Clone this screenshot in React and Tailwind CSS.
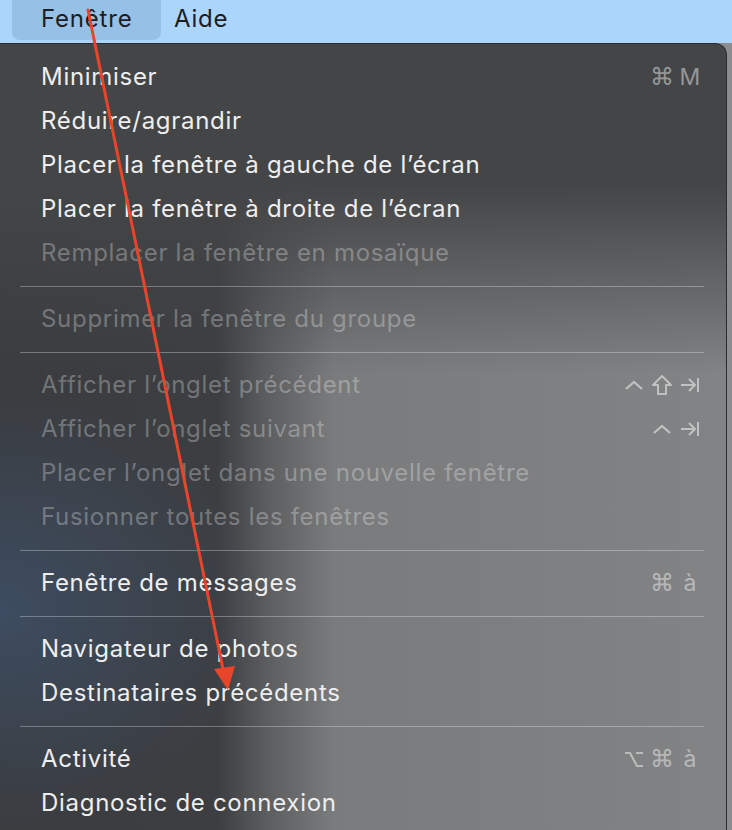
import React from 'react';

const font = { fontFamily: 'Inter, "Noto Sans", sans-serif' };

const Ctrl = () => (
  <svg width="20" height="12" viewBox="0 0 20 12" fill="none" stroke="currentColor" strokeWidth="2.2">
    <path d="M2 10 L10 3 L18 10" />
  </svg>
);
const Shift = () => (
  <svg width="22" height="22" viewBox="0 0 22 22" fill="none" stroke="currentColor" strokeWidth="2" strokeLinejoin="round">
    <path d="M11 2 L20 11 L15 11 L15 20 L7 20 L7 11 L2 11 Z" />
  </svg>
);
const Tab = () => (
  <svg width="20" height="18" viewBox="0 0 20 18" fill="none" stroke="currentColor" strokeWidth="2">
    <path d="M1 9 H15 M9 3 L15 9 L9 15 M18 2 V16" />
  </svg>
);
const Opt = () => (
  <svg width="20" height="18" viewBox="0 0 20 18" fill="none" stroke="currentColor" strokeWidth="2.2">
    <path d="M1 3 H6 L13 16 H19 M12 3 H19" />
  </svg>
);

const glyphs = { ctrl: <Ctrl />, shift: <Shift />, tab: <Tab />, opt: <Opt /> };

// null marks a separator
const items = [
  { label: 'Minimiser', keys: ['⌘', 'M'] },
  { label: 'Réduire/agrandir' },
  { label: 'Placer la fenêtre à gauche de l’écran' },
  { label: 'Placer la fenêtre à droite de l’écran' },
  { label: 'Remplacer la fenêtre en mosaïque', disabled: true },
  null,
  { label: 'Supprimer la fenêtre du groupe', disabled: true },
  null,
  { label: 'Afficher l’onglet précédent', disabled: true, keys: ['ctrl', 'shift', 'tab'] },
  { label: 'Afficher l’onglet suivant', disabled: true, keys: ['ctrl', 'tab'] },
  { label: 'Placer l’onglet dans une nouvelle fenêtre', disabled: true },
  { label: 'Fusionner toutes les fenêtres', disabled: true },
  null,
  { label: 'Fenêtre de messages', keys: ['⌘', 'à'] },
  null,
  { label: 'Navigateur de photos' },
  { label: 'Destinataires précédents' },
  null,
  { label: 'Activité', keys: ['opt', '⌘', 'à'] },
  { label: 'Diagnostic de connexion' },
];

function Shortcut({ keys, dim }) {
  return (
    <div className={`flex items-center ${dim ? 'text-white/50' : 'text-white/45'}`}>
      {keys.map((k, i) => (
        <span
          key={i}
          className="flex h-[28px] w-[28px] items-center justify-center text-[23px] leading-none"
          style={k === '⌘' ? { fontFamily: '"DejaVu Sans", sans-serif', fontSize: '24px' } : undefined}
        >
          {glyphs[k] || k}
        </span>
      ))}
    </div>
  );
}

function MenuRow({ item }) {
  return (
    <div className="flex h-[44px] items-center justify-between pl-[41px] pr-[22px]">
      <span
        className={`text-[24px] tracking-[0.7px] ${
          item.disabled ? 'text-white/30' : 'text-[#eeeeee]'
        }`}
      >
        {item.label}
      </span>
      {item.keys ? <Shortcut keys={item.keys} dim={item.disabled} /> : null}
    </div>
  );
}

export default function App() {
  return (
    <div className="relative h-[830px] w-[732px] overflow-hidden bg-[#8c8d8e]" style={font}>
      {/* Menu bar */}
      <div className="flex h-[43px] items-start bg-[#acd5fb] text-[24px] tracking-[0.8px] text-[#1d1d1f]">
        <div className="ml-[12px] flex h-[40px] w-[149px] items-center rounded-b-lg bg-[#97c0e6] pl-[29px] pb-[2px]">
          Fenêtre
        </div>
        <div className="flex h-[40px] items-center pl-[13px] pb-[2px]">Aide</div>
      </div>

      {/* Dropdown */}
      <div className="h-[787px] w-[727px] rounded-tr-[12px] border-t border-r border-[#2b2b2c] bg-[#808182] bg-[radial-gradient(ellipse_260px_220px_at_0%_72%,rgba(62,82,108,0.75),transparent),linear-gradient(to_bottom,#444547_0%,#444547_18%,rgba(68,69,71,0)_42%),linear-gradient(to_right,#3a3c3f_0%,#3c3e41_30%,#5c5e60_37%,#7a7b7c_46%,#828384_100%)] pt-[11px]">
        {items.map((item, i) =>
          item ? (
            <MenuRow key={i} item={item} />
          ) : (
            <div key={i} className="flex h-[22px] items-center pl-[20px] pr-[22px]">
              <div className="h-px w-full bg-white/30" />
            </div>
          )
        )}
      </div>

      {/* Annotation arrow */}
      <svg className="pointer-events-none absolute left-0 top-0" width="732" height="830">
        <line x1="88" y1="10" x2="224" y2="674" stroke="#e8452b" strokeWidth="3" strokeLinecap="round" />
        <polygon points="228,690 214,669 235,666" fill="#e8452b" />
      </svg>
    </div>
  );
}
